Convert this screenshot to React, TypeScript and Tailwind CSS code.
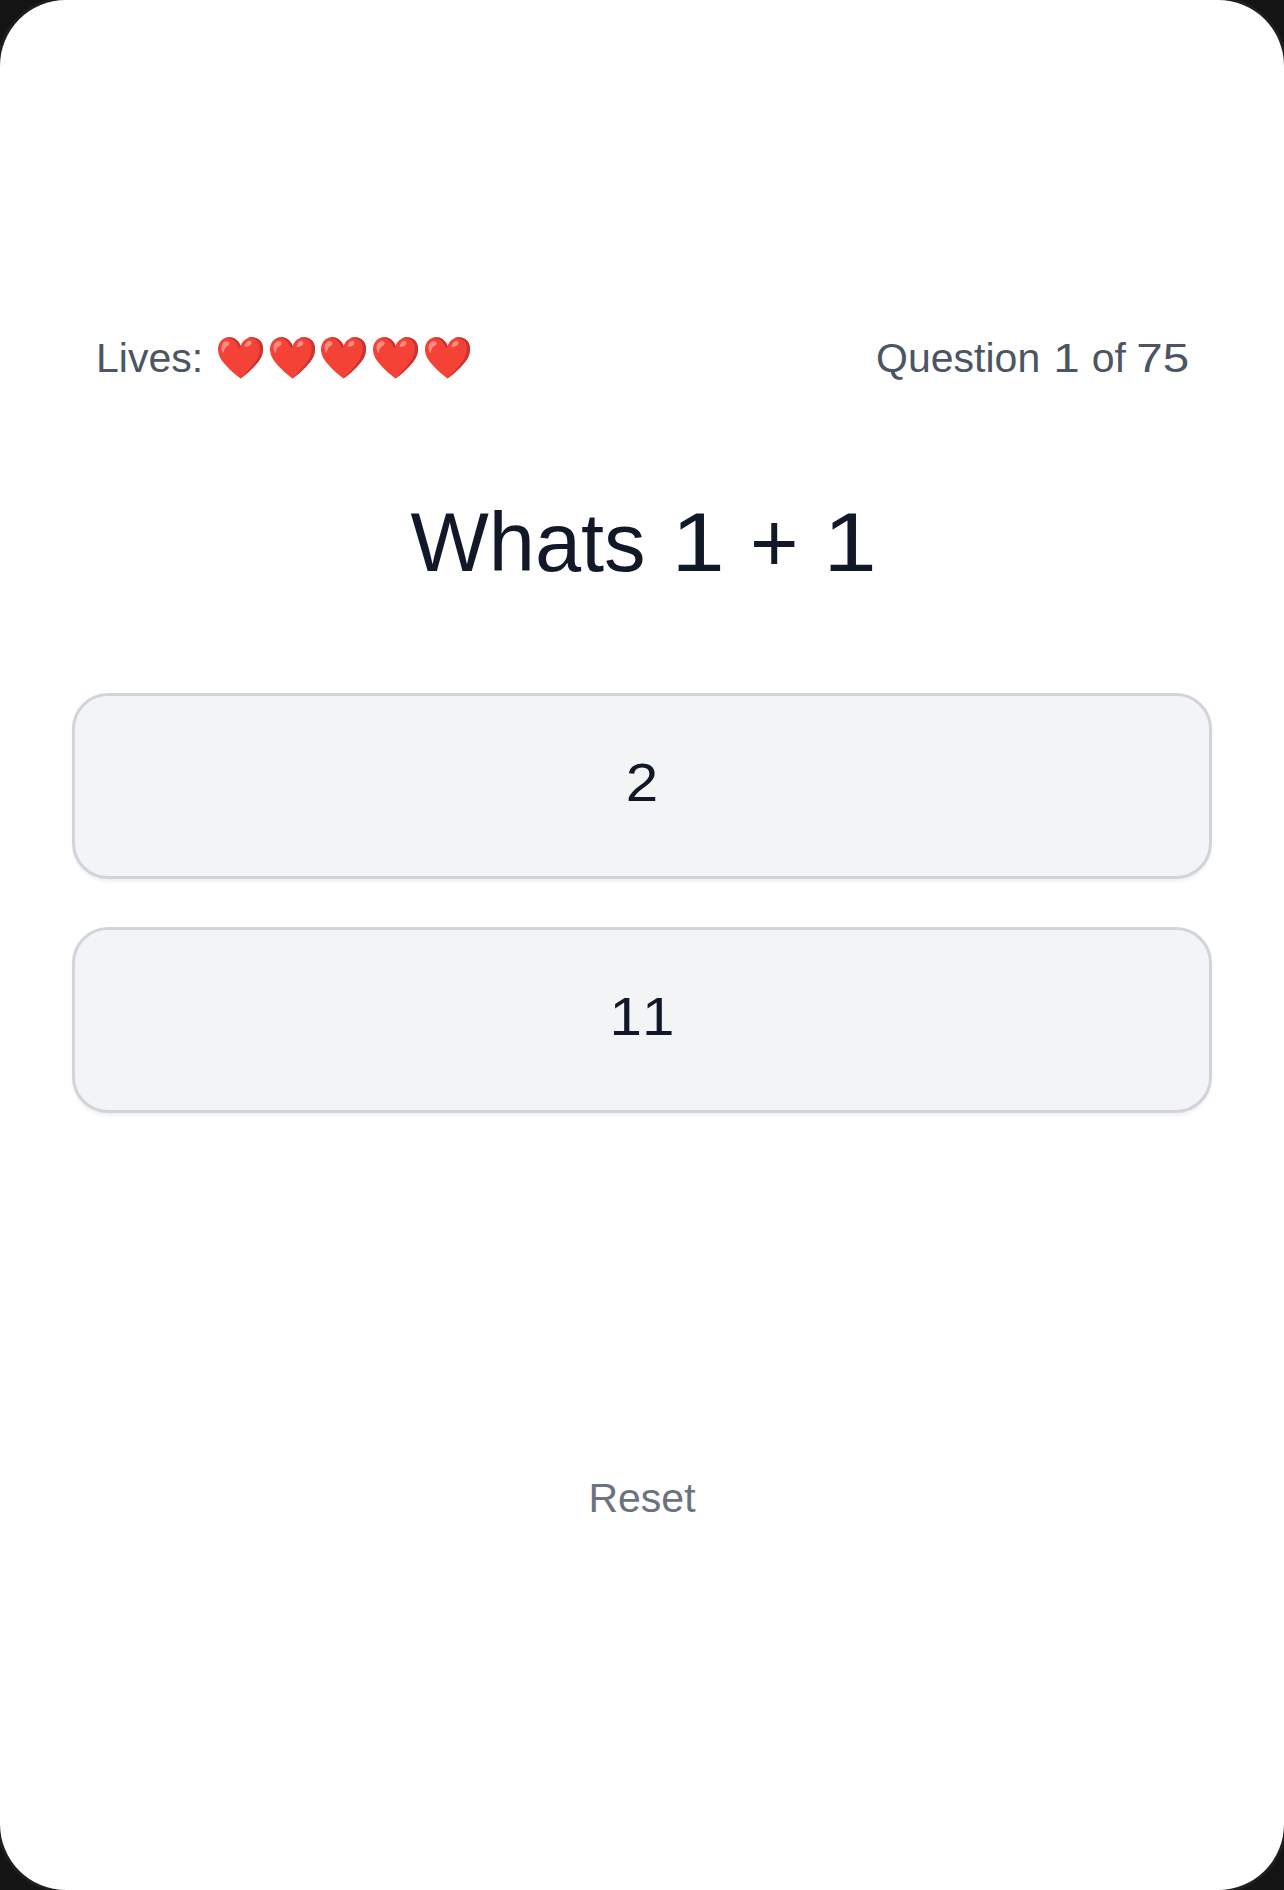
const answers = ['2', '11'];

// digits in the reference are drawn wider than the font's natural shapes
const Num = ({ children }: { children: string }) => (
  <span className="inline-block origin-center scale-x-[1.16]">{children}</span>
);

export default function App() {
  return (
    <div className="h-[1890px] w-[1284px] bg-[#141414] font-['Liberation_Sans',sans-serif] [font-kerning:none]">
      <div className="flex h-full flex-col rounded-[66px] bg-white px-[72px] pt-[325px] shadow-[0_0_0_3px_#1f1f1f]">
        <div className="flex items-center justify-between px-6 text-[41px] leading-[66px] text-[#4b5563]">
          <div className="flex items-center">
            <span>Lives:</span>
            <span className="ml-3 tracking-[0.6px]">❤️❤️❤️❤️❤️</span>
          </div>
          <span className="mr-[2px] [word-spacing:3px]">
            Question <Num>1</Num> of <Num>75</Num>
          </span>
        </div>
        <h1 className="mt-[92px] text-center text-[83px] font-normal leading-[120px] text-[#111827] [word-spacing:6px]">
          Whats <Num>1</Num> + <Num>1</Num>
        </h1>
        <div className="mt-[90px] flex flex-col gap-[48px]">
          {answers.map((answer) => (
            <button
              key={answer}
              className="h-[186px] rounded-[36px] border-[3px] border-[#d1d5db] bg-[#f3f4f6] pb-[7px] text-center text-[54px] text-[#111827] shadow-[0_3px_3px_rgba(0,0,0,0.05)]"
            >
              <span className="inline-block origin-center scale-x-[1.08]">{answer}</span>
            </button>
          ))}
        </div>
        <button className="mt-[349px] self-center text-[41px] leading-[72px] text-[#6b7280]">Reset</button>
      </div>
    </div>
  );
}
